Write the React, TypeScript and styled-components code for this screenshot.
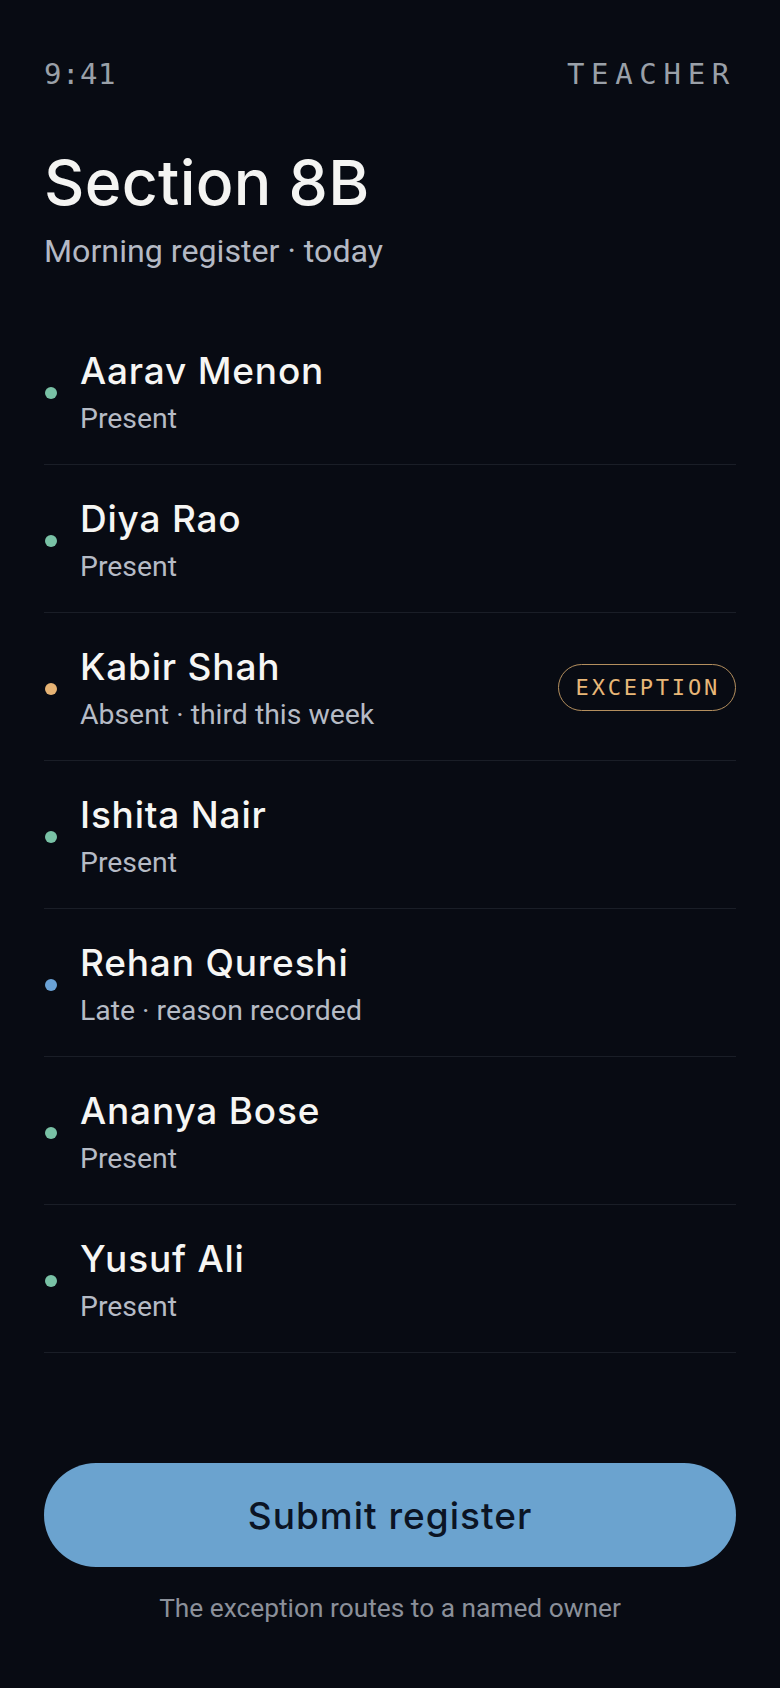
import React from "react";
import styled, { createGlobalStyle } from "styled-components";

const GlobalStyle = createGlobalStyle`
  html, body {
    margin: 0;
    padding: 0;
    background: #080b13;
  }
  * { box-sizing: border-box; }
`;

const Screen = styled.div`
  min-height: 100vh;
  display: flex;
  flex-direction: column;
  padding: 60px 44px 63px;
  background: #080b13;
  color: #f4f4f2;
`;

const StatusBar = styled.div`
  display: flex;
  justify-content: space-between;
  align-items: center;
  font-family: "DejaVu Sans Mono", "Liberation Mono", monospace;
  font-size: 29px;
  line-height: 29px;
  color: #9aa0a8;
`;

const Time = styled.span`
  letter-spacing: 0.5px;
`;

const Role = styled.span`
  letter-spacing: 6.7px;
`;

const Title = styled.h1`
  margin: 59px 0 0;
  font-family: Inter, "Noto Sans", sans-serif;
  font-weight: 500;
  font-size: 62.5px;
  line-height: 68px;
  letter-spacing: 0.3px;
  color: #f4f4f2;
`;

const Subtitle = styled.p`
  margin: 15px 0 0;
  font-family: Roboto, "Noto Sans", sans-serif;
  font-size: 32.2px;
  line-height: 40px;
  color: #b4b9c4;
`;

const List = styled.ul`
  list-style: none;
  margin: 46px 0 0;
  padding: 0;
`;

const Row = styled.li`
  display: flex;
  align-items: center;
  gap: 23px;
  padding: 32px 0 27px;
  border-bottom: 1px solid #1a1e27;
`;

const Dot = styled.span<{ $color: string }>`
  flex: none;
  width: 12px;
  height: 12px;
  border-radius: 50%;
  margin-left: 1px;
  background: ${(p) => p.$color};
`;

const Info = styled.div`
  flex: 1;
  display: flex;
  flex-direction: column;
  gap: 8px;
`;

const Name = styled.div`
  font-family: Inter, "Noto Sans", sans-serif;
  font-weight: 500;
  font-size: 37px;
  line-height: 44px;
  letter-spacing: 0.8px;
  color: #f6f6f4;
`;

const Status = styled.div`
  font-family: Roboto, "Noto Sans", sans-serif;
  font-size: 28.4px;
  line-height: 36px;
  color: #b6bbc5;
`;

const Badge = styled.span`
  flex: none;
  display: inline-flex;
  align-items: center;
  height: 47px;
  padding: 0 15px 0 17px;
  border: 1.5px solid #b48f5e;
  border-radius: 24px;
  font-family: "DejaVu Sans Mono", "Liberation Mono", monospace;
  font-size: 22px;
  letter-spacing: 2.8px;
  color: #e8b778;
  margin-top: -3px;
`;

const Footer = styled.div`
  margin-top: auto;
  display: flex;
  flex-direction: column;
  align-items: stretch;
  gap: 24px;
`;

const SubmitButton = styled.button`
  height: 104px;
  border: none;
  border-radius: 52px;
  background: #6ba3cf;
  font-family: Inter, "Noto Sans", sans-serif;
  font-weight: 500;
  font-size: 37px;
  letter-spacing: 1px;
  color: #0b1424;
  cursor: pointer;
`;

const Note = styled.p`
  margin: 0;
  text-align: center;
  font-family: Roboto, "Noto Sans", sans-serif;
  font-size: 26.3px;
  line-height: 34px;
  color: #8b909a;
`;

type Student = {
  name: string;
  status: string;
  color: string;
  exception?: boolean;
};

const GREEN = "#79c2a6";
const AMBER = "#e6b374";
const BLUE = "#6aa2d6";

const students: Student[] = [
  { name: "Aarav Menon", status: "Present", color: GREEN },
  { name: "Diya Rao", status: "Present", color: GREEN },
  { name: "Kabir Shah", status: "Absent · third this week", color: AMBER, exception: true },
  { name: "Ishita Nair", status: "Present", color: GREEN },
  { name: "Rehan Qureshi", status: "Late · reason recorded", color: BLUE },
  { name: "Ananya Bose", status: "Present", color: GREEN },
  { name: "Yusuf Ali", status: "Present", color: GREEN },
];

export default function App() {
  return (
    <>
      <GlobalStyle />
      <Screen>
        <StatusBar>
          <Time>9:41</Time>
          <Role>TEACHER</Role>
        </StatusBar>
        <Title>Section 8B</Title>
        <Subtitle>Morning register · today</Subtitle>
        <List>
          {students.map((s) => (
            <Row key={s.name}>
              <Dot $color={s.color} />
              <Info>
                <Name>{s.name}</Name>
                <Status>{s.status}</Status>
              </Info>
              {s.exception && <Badge>EXCEPTION</Badge>}
            </Row>
          ))}
        </List>
        <Footer>
          <SubmitButton>Submit register</SubmitButton>
          <Note>The exception routes to a named owner</Note>
        </Footer>
      </Screen>
    </>
  );
}
